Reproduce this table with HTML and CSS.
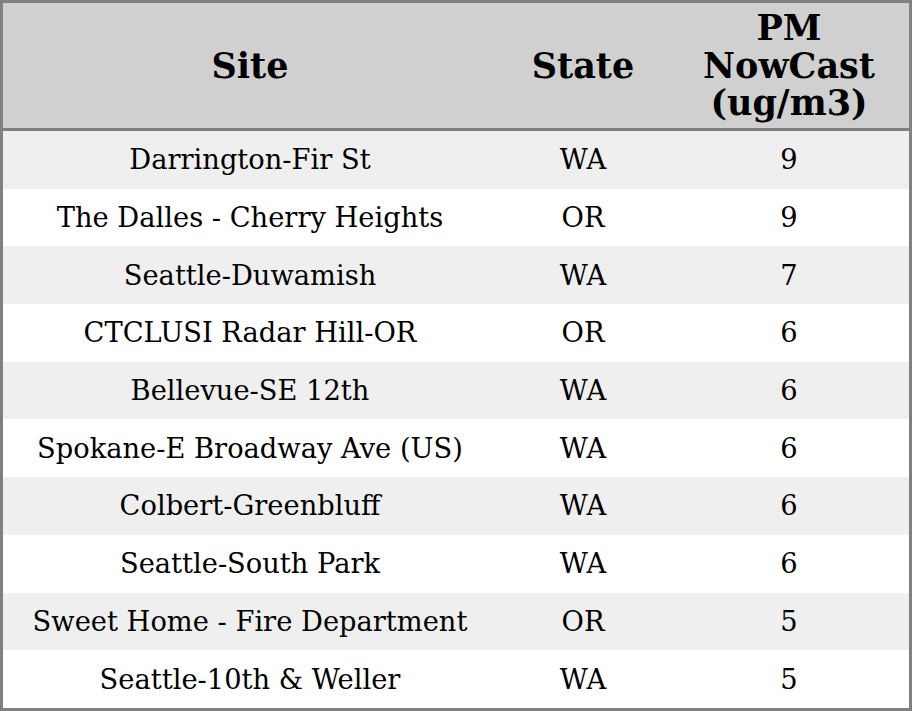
FILE: index.html
```html
<!DOCTYPE html>
<html>
<head>
<meta charset="utf-8">
<link rel="stylesheet" href="styles.css">
</head>
<body>
<table class="aq">
  <colgroup>
    <col class="c-site">
    <col class="c-state">
    <col class="c-pm">
  </colgroup>
  <thead>
    <tr class="head">
      <th>Site</th>
      <th>State</th>
      <th>PM<br>NowCast<br>(ug/m3)</th>
    </tr>
  </thead>
  <tbody>
    <tr><td>Darrington-Fir St</td><td>WA</td><td>9</td></tr>
    <tr><td>The Dalles - Cherry Heights</td><td>OR</td><td>9</td></tr>
    <tr><td>Seattle-Duwamish</td><td>WA</td><td>7</td></tr>
    <tr><td>CTCLUSI Radar Hill-OR</td><td>OR</td><td>6</td></tr>
    <tr><td>Bellevue-SE 12th</td><td>WA</td><td>6</td></tr>
    <tr><td>Spokane-E Broadway Ave (US)</td><td>WA</td><td>6</td></tr>
    <tr><td>Colbert-Greenbluff</td><td>WA</td><td>6</td></tr>
    <tr><td>Seattle-South Park</td><td>WA</td><td>6</td></tr>
    <tr><td>Sweet Home - Fire Department</td><td>OR</td><td>5</td></tr>
    <tr><td>Seattle-10th &amp; Weller</td><td>WA</td><td>5</td></tr>
  </tbody>
</table>
</body>
</html>
```

FILE: styles.css
```css
html, body {
  margin: 0;
  padding: 0;
  background: #ffffff;
}

.aq {
  width: 912px;
  border-collapse: separate;
  border-spacing: 0;
  table-layout: fixed;
  border: 3px solid #808080;
  font-family: "DejaVu Serif", serif;
  color: #000000;
}

.c-site { width: 494px; }
.c-state { width: 172px; }
.c-pm { width: 240px; }

.aq th,
.aq td {
  padding: 0;
  text-align: center;
  vertical-align: middle;
}

.head th {
  height: 125px;
  background: #d0d0d0;
  font-size: 35px;
  font-weight: bold;
  line-height: 37.5px;
  border-bottom: 3px solid #808080;
}

.aq td {
  height: 56.7px;
  padding-top: 1px;
  font-size: 27.3px;
  line-height: 30px;
}

.aq tbody tr:nth-child(odd) td {
  background: #efefef;
}

.aq tbody tr:nth-child(even) td {
  background: #ffffff;
}
```
